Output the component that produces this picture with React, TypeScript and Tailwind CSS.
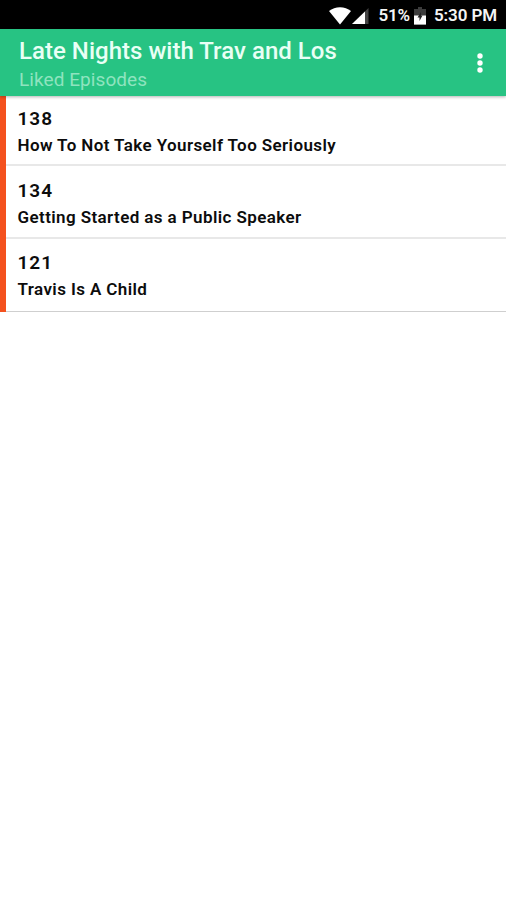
import React from 'react';

interface Episode {
  number: number;
  title: string;
}

const episodes: Episode[] = [
  { number: 138, title: 'How To Not Take Yourself Too Seriously' },
  { number: 134, title: 'Getting Started as a Public Speaker' },
  { number: 121, title: 'Travis Is A Child' },
];

const StatusBar: React.FC = () => (
  <div className="h-[29px] bg-black text-[#f5f5f5] flex items-center justify-end pr-[9px] pt-[2px]">
    {/* Wifi */}
    <svg className="w-[22px] h-[18px]" viewBox="0 0 22 18" fill="#fff">
      <path d="M0 4C6 -1.1 16 -1.1 22 4L11 17.5Z" />
    </svg>
    {/* Signal */}
    <svg className="w-[18px] h-[18px]" viewBox="0 0 18 18">
      <path d="M17.5 1V17H1Z" fill="#444" />
      <path d="M14 4.4V17H1Z" fill="#fff" />
    </svg>
    <span className="ml-[10px] text-[17px] tracking-[-0.2px] font-semibold">51%</span>
    {/* Battery */}
    <svg className="w-[12px] h-[18px] ml-[4px]" viewBox="0 0 12 18">
      <path d="M4 0H8V2H12V18H0V2H4Z" fill="#3c3c3c" />
      <path d="M0 8.5H12V17.5H0Z" fill="#fff" />
      <path d="M7 5L3.5 10.5H5.5V14L8.5 8.5H7Z" fill="#222" />
    </svg>
    <span className="ml-[8px] text-[17px] tracking-[-0.1px] font-semibold">5:30 PM</span>
  </div>
);

const App: React.FC = () => {
  return (
    <div className="w-full h-screen overflow-hidden bg-white font-['Roboto',sans-serif]">
      <StatusBar />

      {/* Header */}
      <header className="relative h-[67px] bg-[#27c383] shadow-[0_1px_3px_rgba(0,0,0,0.3)] flex items-center justify-between pl-[19px] pr-[23px]">
        <div className="pt-[5px]">
          <h1 className="text-[24px] leading-[29px] tracking-[0.03px] font-medium text-[#e9fff5]">Late Nights with Trav and Los</h1>
          <p className="text-[19px] leading-[28px] tracking-[0.07px] text-[#8fe3bf]">Liked Episodes</p>
        </div>
        <svg className="w-[6px] h-[20px]" viewBox="0 0 6 20" fill="#fff">
          <circle cx="3" cy="3" r="2.7" />
          <circle cx="3" cy="10" r="2.7" />
          <circle cx="3" cy="17" r="2.7" />
        </svg>
      </header>

      {/* Liked episodes */}
      <ul className="border-l-[6px] border-[#f4511e] text-[#0c0c0c]">
        {episodes.map((episode) => (
          <li
            key={episode.number}
            className="h-[73px] first:h-[70px] pl-[11.5px] pt-[12px] first:pt-[10px] last:pt-[11px] border-b-2 border-[#e8e8e8] last:border-b last:border-[#cfcfcf]"
          >
            <p className="text-[19px] leading-[26px] tracking-[1px] font-semibold">{episode.number}</p>
            <p className="text-[17px] leading-[26px] tracking-[0.4px] font-semibold">{episode.title}</p>
          </li>
        ))}
      </ul>
    </div>
  );
};

export default App;
